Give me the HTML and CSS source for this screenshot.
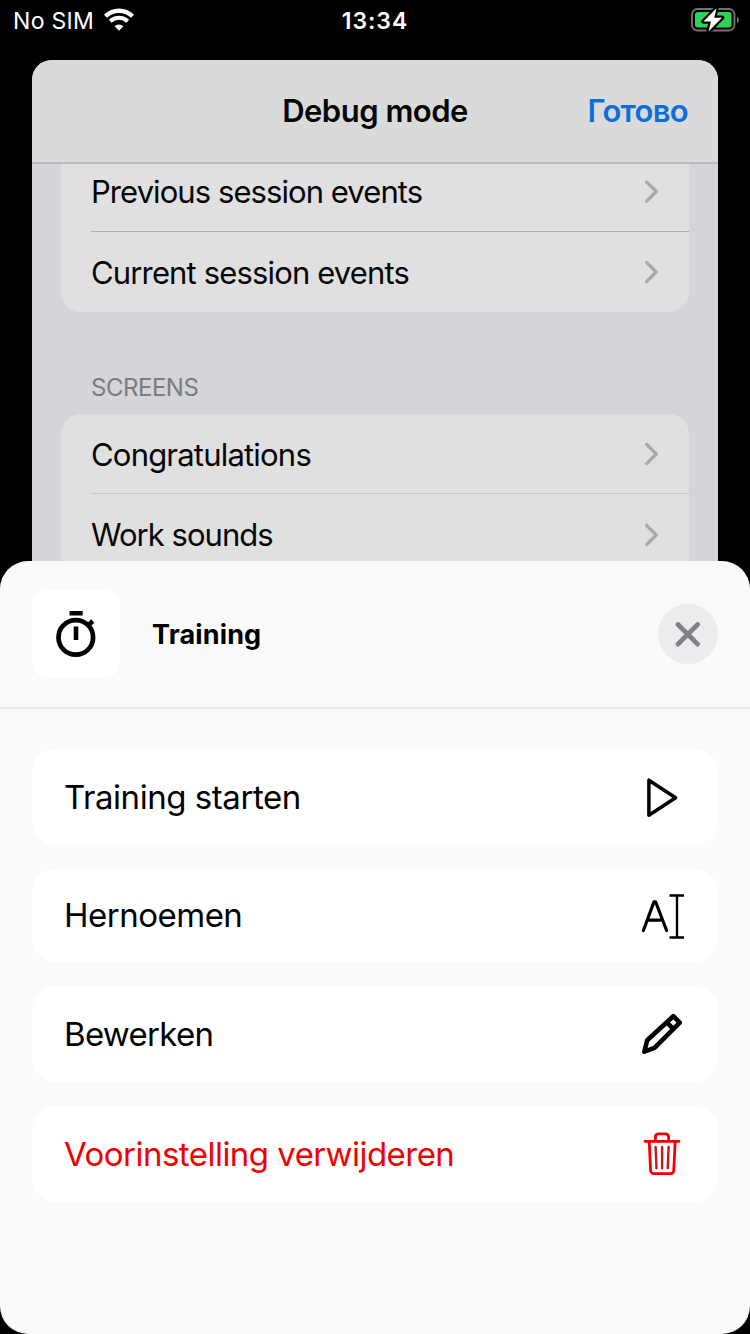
FILE: index.html
```html
<!DOCTYPE html>
<html lang="nl">
<head>
<meta charset="utf-8">
<title>Training</title>
<link rel="stylesheet" href="styles.css">
</head>
<body>
<div class="phone">
  <header class="status">
    <div class="carrier">
      <span class="carrier-name">No SIM</span>
      <svg class="wifi" width="30" height="24" viewBox="0 0 30 24">
        <path d="M1.5 8.2A19.4 19.4 0 0 1 28.500 8.200" fill="none" stroke="#fff" stroke-width="4.300"/>
        <path d="M6.300 13.300A12.500 12.500 0 0 1 23.700 13.300" fill="none" stroke="#fff" stroke-width="4"/>
        <path d="M15 22.700L10.600 18.200A6.300 6.300 0 0 1 19.400 18.200Z" fill="#fff"/>
      </svg>
    </div>
    <time class="clock">13:34</time>
    <svg class="battery" width="48" height="26" viewBox="0 0 48 26">
      <rect x="1" y="2" width="42.500" height="21.500" rx="5.500" fill="none" stroke="#737377" stroke-width="1.800"/>
      <path d="M46 9.500q1.800 1 1.800 3.500t-1.800 3.500z" fill="#737377"/>
      <rect x="4" y="5" width="36.500" height="15.500" rx="3" fill="#31d158"/>
      <path d="M25.500 1.200L12.500 14.500H20L17.500 24.500L31 10.700H23.200Z" fill="#fff" stroke="#000" stroke-width="4.500" stroke-linejoin="round" paint-order="stroke"/>
    </svg>
  </header>

  <section class="modal">
    <div class="navbar">
      <h1 class="nav-title">Debug mode</h1>
      <a class="nav-done">Готово</a>
    </div>
    <div class="scroll">
      <div class="group group-clipped">
        <div class="item"><span class="t-prev">Previous session events</span><svg class="chev" width="14" height="24" viewBox="0 0 14 24"><path d="M1.700 3L11.300 12.500L1.700 22"/></svg></div>
        <div class="rule rule-dark"></div>
        <div class="item"><span class="t-cur">Current session events</span><svg class="chev" width="14" height="24" viewBox="0 0 14 24"><path d="M1.700 2.500L11.300 12L1.700 21.500"/></svg></div>
      </div>
      <h2 class="group-label">SCREENS</h2>
      <div class="group group-open">
        <div class="item item-first"><span class="t-con">Congratulations</span><svg class="chev" width="14" height="24" viewBox="0 0 14 24"><path d="M1.700 2.500L11.300 12L1.700 21.500"/></svg></div>
        <div class="rule"></div>
        <div class="item item-last"><span class="t-work">Work sounds</span><svg class="chev" width="14" height="24" viewBox="0 0 14 24"><path d="M1.700 2.500L11.300 12L1.700 21.500"/></svg></div>
      </div>
    </div>
  </section>

  <section class="sheet">
    <div class="sheet-head">
      <div class="tile">
        <svg width="44" height="50" viewBox="0 0 44 50" fill="none" stroke="#000">
          <circle cx="21.800" cy="28.400" r="17.300" stroke-width="4.700"/>
          <path d="M15.500 4.300H28.700M22 17.500V31" stroke-width="4.600"/>
          <path d="M33.500 17L38.800 12" stroke-width="4.600"/>
        </svg>
      </div>
      <h2 class="sheet-title">Training</h2>
      <button class="close" aria-label="Sluiten">
        <svg width="26" height="26" viewBox="0 0 26 26"><path d="M3 3.500L22.600 23.100M22.600 3.500L3 23.100" stroke="#828286" stroke-width="4.800" stroke-linecap="round"/></svg>
      </button>
    </div>
    <div class="actions">
      <div class="action"><span class="t-start">Training starten</span>
        <svg width="48" height="48" viewBox="0 0 48 48"><path d="M10.900 7.200V42.300L37.600 24.700Z" fill="none" stroke="#000" stroke-width="3.500" stroke-linejoin="round"/></svg>
      </div>
      <div class="action action-short"><span class="t-ren">Hernoemen</span>
        <svg width="48" height="48" viewBox="0 0 48 48" fill="none" stroke="#000"><path d="M5.400 38.500L16 9.800H17.600L28.600 38.500M9.300 28.200H24.700" stroke-width="3.200" stroke-linecap="round" stroke-linejoin="round"/><path d="M31.500 3.500H46M31.500 45.500H46M39 3.500V45.500" stroke-width="2.400"/></svg>
      </div>
      <div class="action"><span class="t-edit">Bewerken</span>
        <svg width="48" height="48" viewBox="0 0 48 48" fill="none" stroke="#000" stroke-width="4.600"><path d="M6.300 41.700L9.200 30.300L35.300 6.200L41.700 12.700L16.500 37.900Z" stroke-linejoin="round"/><path d="M28.600 12.200L35.800 19.400"/></svg>
      </div>
      <div class="action action-danger"><span class="t-del">Voorinstelling verwijderen</span>
        <svg width="48" height="48" viewBox="0 0 48 48" fill="none" stroke="#f00000" stroke-width="2.800" stroke-linecap="round" stroke-linejoin="round"><path d="M7 11.400H41M17.400 11V7.200Q17.400 3.800 20.800 3.800H27.200Q30.600 3.800 30.600 7.200V11M11.200 11.500L12.600 40.200Q12.800 43.700 16.200 43.700H32.300Q35.600 43.700 35.800 40.200L37.200 11.500"/><path d="M17.600 17L18.500 38.300M24.100 17V38.300M30.600 17L29.700 38.300" stroke="#c31b1b" stroke-width="2.400"/></svg>
      </div>
    </div>
  </section>
</div>
</body>
</html>
```

FILE: styles.css
```css
* { box-sizing: border-box; }
body { margin: 0; background: #000; font-family: Inter, "Liberation Sans", sans-serif; }
h1, h2 { margin: 0; }
.phone { width: 750px; height: 1334px; display: flex; flex-direction: column; overflow: hidden; }

.status { height: 60px; flex: none; display: grid; grid-template-columns: 1fr auto 1fr; padding: 8px 11px 0 13px; align-items: start; color: #fff; }
.carrier { display: flex; gap: 10px; }
.carrier-name { font-size: 23px; line-height: 26px; letter-spacing: 0.3px; }
.clock { margin-right: 2px; font-size: 23px; line-height: 26px; font-weight: 600; letter-spacing: 1px; }
.battery { justify-self: end; margin-top: -1px; }

.modal { flex: none; width: 686px; height: 501px; margin: 0 auto; background: #d4d4d9; border-radius: 20px 20px 0 0; overflow: hidden; }
.navbar { height: 104px; background: #dadadb; border-bottom: 2px solid #bdbdc0; display: grid; grid-template-columns: 1fr auto 1fr; align-items: center; padding: 0 30px; }
.nav-title { grid-column: 2; font-size: 31px; font-weight: 600; letter-spacing: -0.5px; line-height: 40px; color: #060606; }
.nav-done { justify-self: end; font-size: 31px; font-weight: 600; line-height: 40px; letter-spacing: -0.7px; color: #0a6fdc; }
.scroll { height: 397px; overflow: hidden; padding: 0 29px; }
.group { background: #e0e0e0; border-radius: 20px; }
.group-clipped { margin-top: -13px; border-radius: 0 0 20px 20px; }
.group-open { border-radius: 20px 20px 0 0; }
.item { height: 80px; display: flex; align-items: center; justify-content: space-between; padding: 0 30px; font-size: 31px; color: #060606; }
.item-first { height: 79px; padding-top: 1px; }
.item-last { height: 81px; }
.t-prev { letter-spacing: -0.93px; }
.t-cur { letter-spacing: -0.85px; }
.t-con { letter-spacing: -0.8px; }
.t-work { letter-spacing: -0.98px; }
.chev path { fill: none; stroke: #a9a9ab; stroke-width: 3.2; stroke-linecap: round; stroke-linejoin: round; }
.rule { height: 1px; margin-left: 30px; background: #c6c6c8; }
.rule-dark { background: #aeaeb0; }
.group-label { padding: 60px 30px 11px; font-size: 24px; line-height: 31px; font-weight: 400; letter-spacing: -0.48px; color: #7c7c81; }

.sheet { flex: none; height: 773px; background: #fafafa; border-radius: 28px; }
.sheet-head { height: 148px; border-bottom: 2px solid #e9e9ea; display: flex; align-items: center; padding: 0 32px; }
.tile { width: 88px; height: 88px; border-radius: 16px; background: #fff; display: grid; place-items: center; }
.sheet-title { margin-left: 32px; padding-top: 2px; font-size: 27px; font-weight: 700; line-height: 36px; letter-spacing: 0.15px; }
.close { margin-left: auto; width: 60px; height: 60px; border: 0; padding: 0; border-radius: 50%; background: #ececee; display: grid; place-items: center; }
.actions { display: flex; flex-direction: column; gap: 24px; padding: 40px 32px 0; }
.action { height: 96px; border-radius: 24px; background: #fff; display: flex; align-items: center; justify-content: space-between; padding: 0 32px; font-size: 33px; color: #000; }
.action-short { height: 93px; }
.action-short .t-ren { margin-top: -2px; }
.action-danger { color: #f00000; }
.t-start { letter-spacing: -0.45px; }
.t-ren { letter-spacing: -0.5px; }
.t-edit { letter-spacing: -0.7px; }
.t-del { letter-spacing: -0.53px; }
```
